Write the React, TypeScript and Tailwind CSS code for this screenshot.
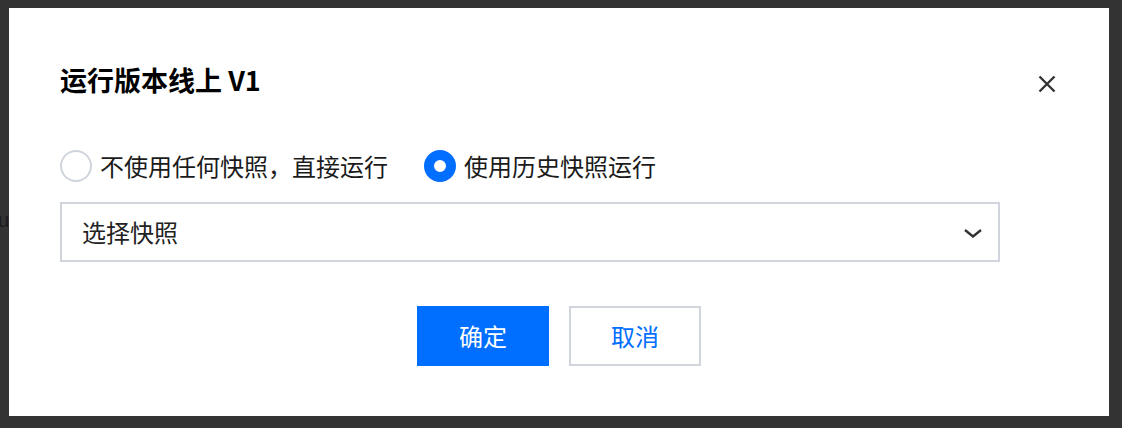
import { useState } from "react";

const font = "font-['Noto_Sans_CJK_SC','Noto_Sans',sans-serif]";

export default function App() {
  const [mode, setMode] = useState<"none" | "history">("history");

  return (
    <div className={`relative w-[1122px] h-[428px] bg-[#333333] pt-[8px] pl-[9px] ${font}`}>
      {/* page text peeking out behind the overlay */}
      <span className="absolute left-[-2px] top-[208px] text-[20px] leading-[24px] text-[#1c1c1c] font-['Liberation_Sans',sans-serif]">
        u
      </span>

      <div className="w-[1100px] h-[408px] bg-white pt-[54px] pl-[51px] pr-[53px]">
        {/* Header */}
        <div className="flex items-center justify-between h-[36px]">
          <h1 className="text-[27px] leading-[36px] font-bold text-black">运行版本线上 V1</h1>
          <button className="mt-[8px] w-[18px] h-[18px] text-[#333]">
            <svg viewBox="0 0 18 18" width="18" height="18" fill="none" stroke="currentColor" strokeWidth="2.4">
              <path d="M1.5 1.5L16.5 16.5M16.5 1.5L1.5 16.5" />
            </svg>
          </button>
        </div>

        {/* Radios */}
        <div className="mt-[52px] flex items-center gap-x-[36px] h-[32px]">
          <Radio checked={mode === "none"} onClick={() => setMode("none")} label="不使用任何快照，直接运行" />
          <Radio checked={mode === "history"} onClick={() => setMode("history")} label="使用历史快照运行" />
        </div>

        {/* Select */}
        <div className="mt-[20px] w-[940px] h-[60px] border-2 border-[#cfd4dd] flex items-center justify-between pl-[20px] pr-[16px]">
          <span className="text-[24px] leading-[32px] text-[#222]">选择快照</span>
          <svg viewBox="0 0 18 9" width="18" height="9" fill="none" stroke="#333" strokeWidth="2.4" className="mt-[2px]">
            <path d="M1 1l8 6.5L17 1" />
          </svg>
        </div>

        {/* Footer */}
        <div className="mt-[44px] flex justify-center gap-[20px] -ml-[51px] -mr-[53px]">
          <button className="w-[132px] h-[60px] bg-[#006eff] text-white text-[24px] leading-[32px]">确定</button>
          <button className="w-[132px] h-[60px] border-2 border-[#cfd4dd] bg-white text-[#006eff] text-[24px] leading-[32px]">
            取消
          </button>
        </div>
      </div>
    </div>
  );
}

function Radio({ checked, label, onClick }: { checked: boolean; label: string; onClick: () => void }) {
  return (
    <label onClick={onClick} className="flex items-center gap-[8px] cursor-pointer">
      {checked ? (
        <span className="w-[32px] h-[32px] rounded-full border-[10px] border-[#006eff] bg-white" />
      ) : (
        <span className="w-[32px] h-[32px] rounded-full border-2 border-[#cfd4dd] bg-white" />
      )}
      <span className="text-[24px] leading-[32px] text-[#1b1b1b]">{label}</span>
    </label>
  );
}
